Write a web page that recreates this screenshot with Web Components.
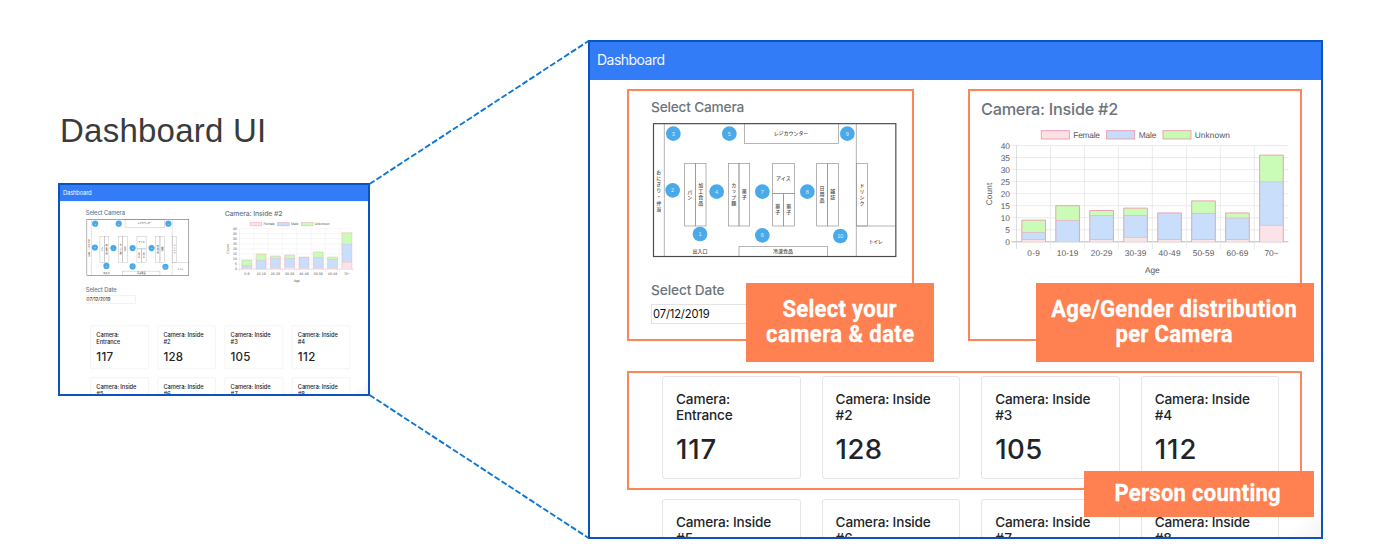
<!DOCTYPE html>
<html lang="en">
<head>
<meta charset="utf-8">
<title>Dashboard UI</title>
<style>
html, body { margin: 0; background: #fff; }
body { width: 1400px; height: 560px; overflow: hidden; }
</style>
</head>
<body>
<slide-page></slide-page>
<script>
const define = (name, html, setup) => {
  const template = document.createElement('template');
  template.innerHTML = html;
  customElements.define(name, class extends HTMLElement {
    connectedCallback() {
      if (this.shadowRoot) return;
      this.attachShadow({ mode: 'open' }).append(template.content.cloneNode(true));
      if (setup) setup.call(this, this.shadowRoot);
    }
  });
};

// One line of text tracked out to a given advance width.
const pen = document.createElement('canvas').getContext('2d');
define('fit-text', `<style>:host{display:block;white-space:nowrap}</style><slot></slot>`, function () {
  const cs = getComputedStyle(this), text = this.textContent, squeeze = +(this.getAttribute('squeeze') || 1);
  const want = +this.getAttribute('w') / squeeze;
  if (!want) return;
  pen.font = `${cs.fontWeight} ${cs.fontSize} ${cs.fontFamily}`;
  const have = pen.measureText(text).width;
  this.style.letterSpacing = ((want - have) / text.length) + 'px';
  if (squeeze !== 1) this.style.transform = `scaleX(${squeeze})`;
});

// Store floor plan with numbered camera pins.
define('floor-map', `
<style>
:host{display:block;width:246px;height:136px}
svg{display:block;width:100%;height:100%}
text{font-family:"Noto Sans CJK JP",sans-serif;font-size:15px;fill:#4c4c4c;text-anchor:middle}
.v{writing-mode:vertical-rl}
.pins text{font-family:"Liberation Sans",sans-serif;font-size:17px;fill:#d6edfb}
</style>
<svg viewBox="36 36 738 408"></svg>`, function (root) {
  const rects = [[134,160,32,188],[166,160,32,188],[265,160,32,188],[297,160,32,188],[398,160,65,91],
    [398,251,32,97],[430,251,33,97],[530,160,32,188],[562,160,33,188],[649,160,33,188],[313,41,282,59],[297,409,265,30]];
  const across = [['レジカウンター',453,75,104],['アイス',430,210,44],['冷凍食品',429,429,60],['出入口',180,429,45],['トイレ',707,398,42]];
  const down = [['おにぎり・弁当',56,241,126],['パン',149,254,30],['加工食品',182,253,70],['カップ麺',281,253,70],['菓子',313,253,34],
    ['菓子',413,298,34],['菓子',446,298,34],['日用品',546,253,52],['雑誌',578,253,34],['ドリンク',666,253,70]];
  const pins = [[180,372],[98,241],[100,71],[230,245],[268,71],[367,376],[367,245],[502,245],[622,71],[601,378]];
  root.querySelector('svg').innerHTML =
    `<g fill="none" stroke="#909090" stroke-width="2">` +
    rects.map(([x, y, w, h]) => `<rect x="${x}" y="${y}" width="${w}" height="${h}"/>`).join('') +
    `<path d="M73 41V439M649 41V439M649 348H768"/></g>` +
    `<rect x="40.500" y="41" width="727" height="398.500" fill="none" stroke="#4a4a4a" stroke-width="3.500"/>` +
    across.map(([t, x, y, w]) => `<text x="${x}" y="${y}" textLength="${w}">${t}</text>`).join('') +
    down.map(([t, x, y, w]) => `<text class="v" x="${x}" y="${y}" textLength="${w}">${t}</text>`).join('') +
    `<g class="pins">` + pins.map(([x, y], i) =>
      `<circle cx="${x}" cy="${y}" r="22" fill="#4aa9e9"/><text x="${x}" y="${y + 6}">${i + 1}</text>`).join('') + `</g>`;
});

// Stacked bars: people per age group, split by gender.
define('age-chart', `
<style>
:host{display:block;width:310px;height:150px}
svg{display:block;width:100%;height:100%}
text{font-family:"Liberation Sans",sans-serif;font-size:25px;fill:#585858;text-rendering:geometricPrecision}
</style>
<svg viewBox="66 140 930 450"></svg>`, function (root) {
  const fills = ['#fbe1e5', '#c5dcfb', '#c7fcb3'];
  const data = [['0-9',1,3,5,38],['10-19',0,9,6,65],['20-29',1,10,2,65],['30-39',2,9,3,65],['40-49',1,11,0,66],['50-59',1,11,5,65],['60-69',1,9,2,66],['70~',7,18,11,42]];
  const k = 7.225, base = 484.5, step = 101.9;
  let s = '';
  for (let v = 0; v <= 40; v += 5) {
    const y = base - v * k;
    s += `<path d="M154 ${y}H985" stroke="${v ? '#e4e4e4' : '#b8b8b8'}" stroke-width="${v ? 2.2 : 3}"/>
      <text x="150" y="${y + 9}" text-anchor="end" textLength="${v > 5 ? 28 : 14}">${v}</text>`;
  }
  for (let i = 0; i < 8; i++) s += `<path d="M${169.5 + i * step} 196V506" stroke="${i ? '#e4e4e4' : '#d0d0d0'}" stroke-width="2.200"/>`;
  data.forEach(([label, f, m, u, w], i) => {
    const x = 185.5 + i * step;
    let y = base;
    [f, m, u].forEach((n, j) => {
      if (!n) return;
      const h = n * k;
      y -= h;
      s += `<rect x="${x}" y="${y}" width="71" height="${h}" fill="${fills[j]}" fill-opacity=".94"/>
        <path d="M${x} ${y + h}V${y}H${x + 71}V${y + h}" fill="none" stroke="#ee9cae" stroke-width="2.800"/>`;
    });
    s += `<text x="${x + 35.5}" y="528" text-anchor="middle" textLength="${w}">${label}</text>`;
  });
  [['Female',244,340,80],['Male',440,536,53],['Unknown',609,704,106]].forEach(([t, x, tx, w], j) => {
    s += `<rect x="${x}" y="151" width="84" height="25" fill="${fills[j]}" stroke="#ee9cae" stroke-width="2.800"/>
      <text x="${tx}" y="172" textLength="${w}">${t}</text>`;
  });
  s += `<text x="577" y="578" text-anchor="middle" textLength="44">Age</text>
    <text transform="translate(95 341) rotate(-90)" text-anchor="middle" textLength="68">Count</text>`;
  root.querySelector('svg').innerHTML = s;
});

define('count-card', `
<style>
:host{display:block;box-sizing:border-box;height:103px;border:1px solid #e5e5e5;border-radius:3px;padding:14px 0 0 13px;color:#212529;background:#fff}
.name{font-size:13.600px;line-height:16.400px;font-weight:500}
.num{font-size:27.500px;line-height:30px;font-weight:500;padding-top:10px}
</style>
<div class="name"></div><div class="num"></div>`, function (root) {
  root.querySelector('.name').innerHTML = this.getAttribute('name').split('|').map(p => {
    const [t, w] = p.split('@');
    return `<fit-text w="${w}">${t}</fit-text>`;
  }).join('');
  const value = this.getAttribute('value');
  if (value) root.querySelector('.num').innerHTML = `<fit-text w="${this.getAttribute('w')}">${value}</fit-text>`;
});

define('dashboard-view', `
<style>
:host{display:block;width:741px;height:506px;overflow:hidden;background:linear-gradient(315deg,#f1f1f1 0,#fff 34px) #fff;font-family:Inter,"Liberation Sans",sans-serif;transform-origin:0 0}
header{box-sizing:border-box;height:42.500px;padding:13px 0 0 12px;background:#327cf8;color:#f4f8ff;font-size:14px;line-height:20px}
.top{box-sizing:border-box;display:grid;grid-template-columns:330px 1fr;padding:19.500px 0 0 66px;height:296.500px;color:#6c757d;font-weight:500}
.h{font-size:13.700px;line-height:16px}
floor-map{margin:7px 0 24px 1px}
.date{box-sizing:border-box;width:119px;height:20.500px;margin-top:5.500px;border:1px solid #e3e3e3;padding:0 0 0 1px;color:#111;font-size:11.200px;line-height:19px;font-weight:400}
.big{font-size:16.300px;line-height:20px}
age-chart{margin:7.700px 0 0 1px}
.cards{display:grid;grid-template-columns:repeat(4,138.500px);gap:20px 21.100px;padding-left:77px}
</style>
<header><fit-text w="67.500">Dashboard</fit-text></header>
<div class="top">
  <section>
    <fit-text class="h" w="93">Select Camera</fit-text>
    <floor-map></floor-map>
    <fit-text class="h" w="73.500">Select Date</fit-text>
    <div class="date"><fit-text w="56.500">07/12/2019</fit-text></div>
  </section>
  <section>
    <fit-text class="big" w="137">Camera: Inside #2</fit-text>
    <age-chart></age-chart>
  </section>
</div>
<div class="cards">
  <count-card name="Camera:@54|Entrance@56.500" value="117" w="41"></count-card>
  <count-card name="Camera: Inside@95|#2@17" value="128" w="47"></count-card>
  <count-card name="Camera: Inside@95|#3@17" value="105" w="47.500"></count-card>
  <count-card name="Camera: Inside@95|#4@17" value="112" w="42.500"></count-card>
  <count-card name="Camera: Inside@95|#5@17"></count-card>
  <count-card name="Camera: Inside@95|#6@17"></count-card>
  <count-card name="Camera: Inside@95|#7@17"></count-card>
  <count-card name="Camera: Inside@95|#8@17"></count-card>
</div>`);

// Blue window edge laid over the view it crops.
define('screen-frame', `
<style>
:host{display:block;position:relative;overflow:hidden;box-sizing:border-box}
:host::after{content:"";position:absolute;inset:0;border:2px solid #0c53c0}
</style><slot></slot>`);

define('call-out', `
<style>
:host{position:absolute;box-sizing:border-box;background:#ff8050;color:#fff;font:700 23px/25px Roboto,"Noto Sans",sans-serif;-webkit-text-stroke:.3px #fff;display:flex;flex-direction:column;align-items:center;justify-content:center;padding-bottom:2px}
</style><slot></slot>`);

define('slide-page', `
<style>
:host{display:flex;position:relative;width:1400px;height:560px;box-sizing:border-box;padding:40px 0 0 58px;gap:218px;background:#fff}
.left{width:312px;padding-top:70px}
h1{margin:0 0 33px 2px;height:40px;font:400 33px/41px "Liberation Sans",sans-serif;color:#3b3b3b}
.small{width:312px;height:213px}
.small dashboard-view{transform:scale(.4208)}
.large{width:735px;height:499px}
.large dashboard-view{margin:-3px 0 0 -3px}
.links{position:absolute;left:0;top:0;pointer-events:none}
.mark{position:absolute;box-sizing:border-box;border:2px solid #ff8558}
</style>
<div class="left">
  <h1><fit-text w="206.500">Dashboard UI</fit-text></h1>
  <screen-frame class="small"><dashboard-view></dashboard-view></screen-frame>
</div>
<screen-frame class="large"><dashboard-view></dashboard-view></screen-frame>
<svg class="links" width="1400" height="560"><path d="M369.500 184L588.500 41M369.500 395L588.500 538" fill="none" stroke="#0f76d2" stroke-width="1.900" stroke-dasharray="6 2.300"/></svg>
<div class="mark" style="left:627px;top:89px;width:287px;height:252px"></div>
<div class="mark" style="left:968px;top:89px;width:334px;height:252px"></div>
<div class="mark" style="left:627px;top:371px;width:675px;height:119px"></div>
<call-out style="left:746px;top:283px;width:188px;height:79px"><fit-text squeeze=".96" w="114.500">Select your</fit-text><fit-text squeeze=".96" w="148.500">camera &amp; date</fit-text></call-out>
<call-out style="left:1036px;top:283px;width:278px;height:79px;padding-right:2px"><fit-text squeeze=".96" w="246">Age/Gender distribution</fit-text><fit-text squeeze=".96" w="117.500">per Camera</fit-text></call-out>
<call-out style="left:1084px;top:471px;width:230px;height:46px;padding-right:2px"><fit-text squeeze=".96" w="166.500">Person counting</fit-text></call-out>`);
</script>
</body>
</html>
